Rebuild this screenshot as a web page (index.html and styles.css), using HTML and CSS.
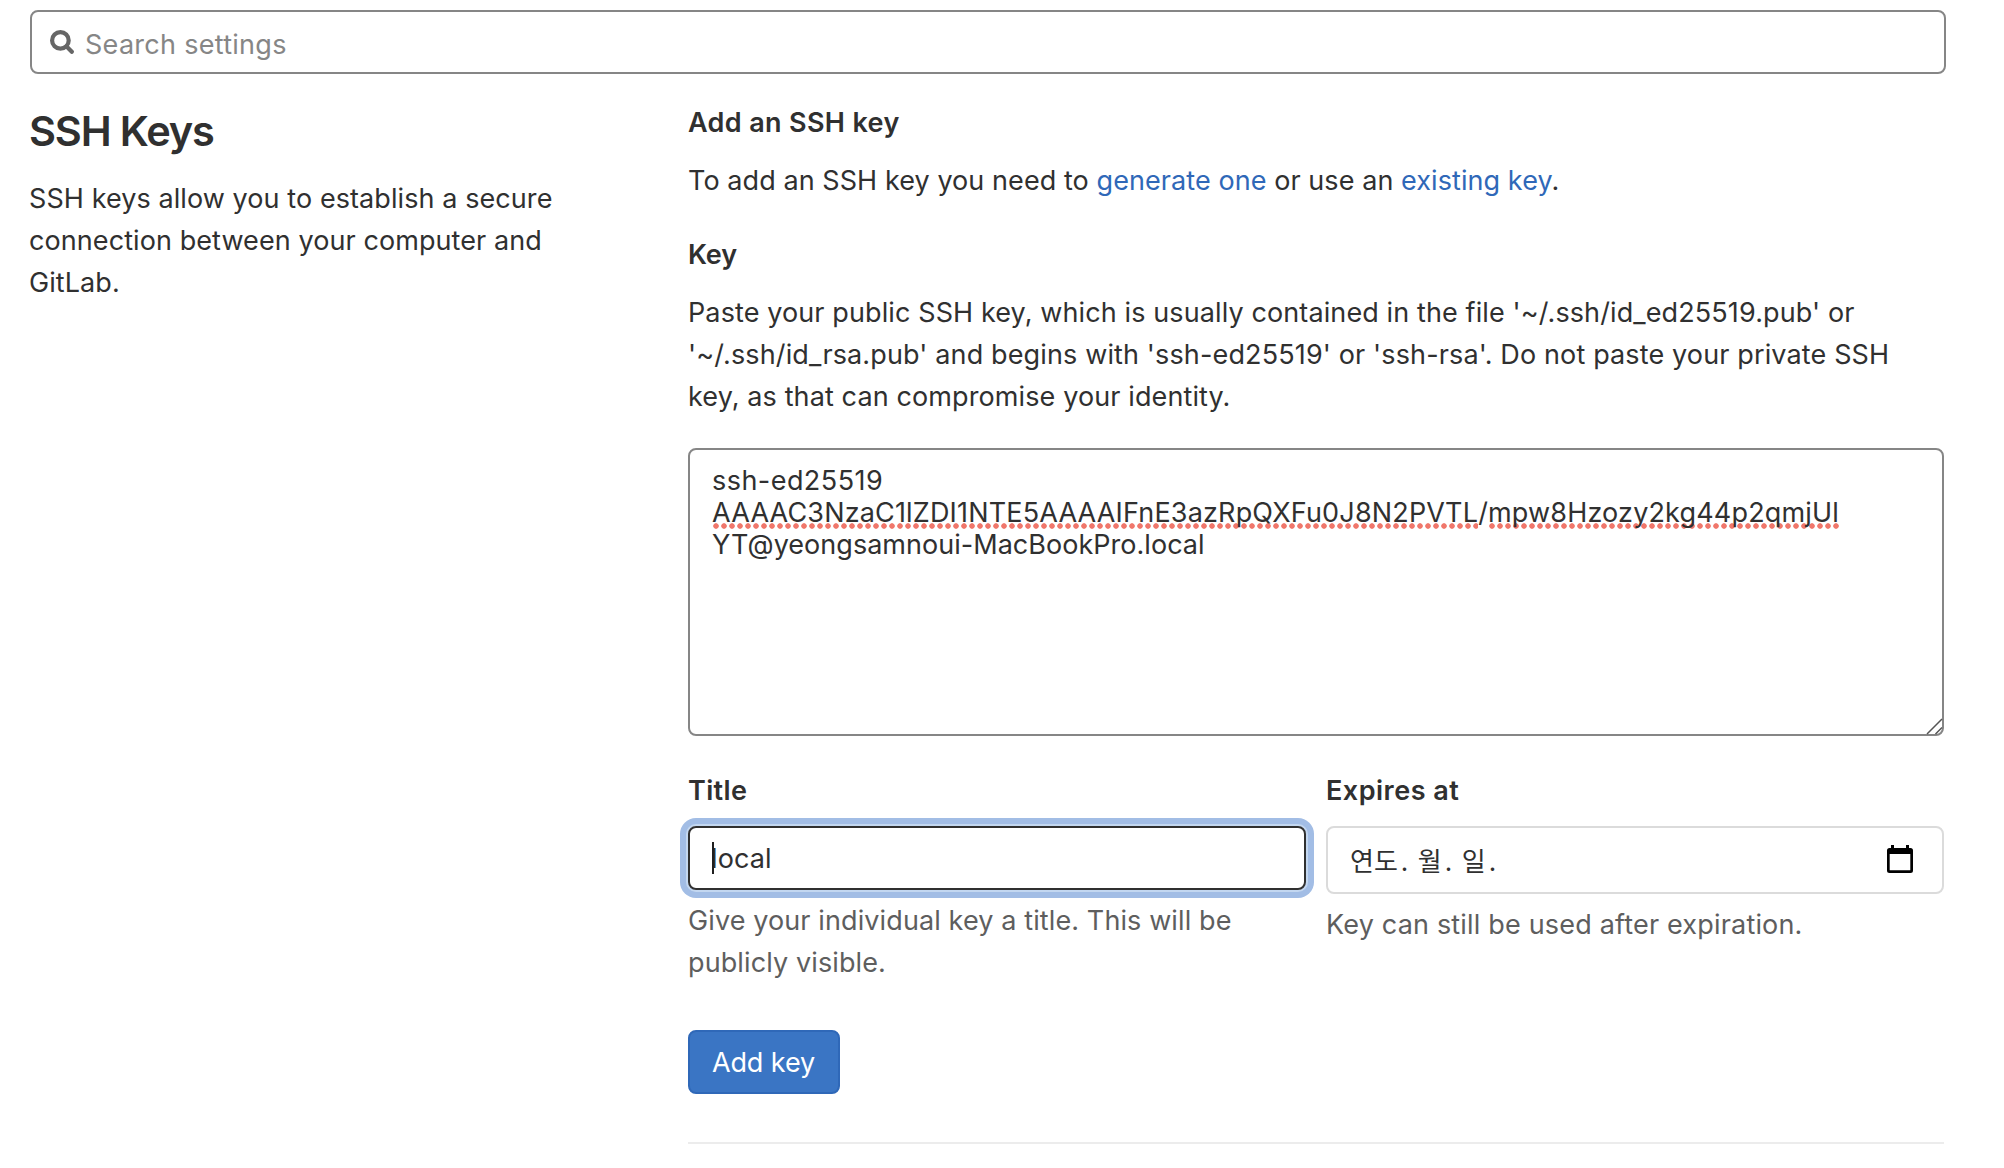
FILE: index.html
```html
<!DOCTYPE html>
<html lang="en">
<head>
<meta charset="utf-8">
<title>SSH Keys</title>
<link rel="stylesheet" href="styles.css">
</head>
<body>
<div class="search">
  <svg class="search-icon" width="24" height="24" viewBox="0 0 24 24" fill="none" stroke="#666" stroke-width="4.2" stroke-linecap="round"><circle cx="10.4" cy="10.4" r="8.3"/><path d="M16.6 16.6 21.8 21.8"/></svg>
  <span class="search-text">Search settings</span>
</div>
<main class="layout">
  <section class="intro">
    <h1>SSH Keys</h1>
    <p><span class="line intro-line">SSH keys allow you to establish a secure</span><span class="line intro-line">connection between your computer and</span><span class="line intro-line">GitLab.</span></p>
  </section>
  <section class="form">
    <h2>Add an SSH key</h2>
    <p class="hint">To add an SSH key you need to <a>generate one</a> or use an <a>existing key</a>.</p>
    <label class="key-label">Key</label>
    <p><span class="line">Paste your public SSH key, which is usually contained in the file '~/.ssh/id_ed25519.pub' or</span><span class="line wide-line">'~/.ssh/id_rsa.pub' and begins with 'ssh-ed25519' or 'ssh-rsa'. Do not paste your private SSH</span><span class="line">key, as that can compromise your identity.</span></p>
    <div class="textarea">
      <span class="line key-type">ssh-ed25519</span>
      <span class="line key-body"><span class="misspelled">AAAAC3NzaC1lZDI1NTE5AAAAIFnE3azRpQXFu0J8N2PVTL</span>/<span class="misspelled">mpw8Hzozy2kg44p2qmjUl</span></span>
      <span class="line key-host">YT@yeongsamnoui-MacBookPro.local</span>
      <svg class="grip" width="18" height="18" viewBox="0 0 18 18" fill="none" stroke="#555" stroke-width="1.5"><path d="M1 16 16 1M9.5 16 16 9.5"/></svg>
    </div>
    <div class="fields">
      <div class="field">
        <label>Title</label>
        <div class="input focused"><span class="caret"></span>local</div>
        <p class="help"><span class="line">Give your individual key a title. This will be</span><span class="line">publicly visible.</span></p>
      </div>
      <div class="field">
        <label class="expires-label">Expires at</label>
        <div class="input date" lang="ko">
          <span class="date-text">연도<span class="sep">.</span>월<span class="sep">.</span>일<span class="sep">.</span></span>
          <svg class="calendar" width="26" height="28" viewBox="0 0 26 28"><path fill="#000" fill-rule="evenodd" d="M4 0h3v3h12V0h3v3h1.500a2.500 2.500 0 0 1 2.500 2.500v20a2.500 2.500 0 0 1-2.500 2.500h-21A2.500 2.500 0 0 1 0 25.500v-20A2.500 2.500 0 0 1 2.500 3H4zM2.700 9v16.300h20.600V9z"/></svg>
        </div>
        <p class="help expires-help">Key can still be used after expiration.</p>
      </div>
    </div>
    <div class="actions"><button class="btn">Add key</button></div>
  </section>
</main>
</body>
</html>
```

FILE: styles.css
```css
* { box-sizing: border-box; }

body {
  margin: 0;
  padding: 10px 58px 0 30px;
  background: #fff;
  color: #303030;
  font: 400 27px/42px Inter, "Noto Sans CJK KR", sans-serif;
  letter-spacing: 0.11px;
}

h1, h2, p { margin: 0; }
label, .line { display: block; }
.line { white-space: nowrap; }

.search {
  display: flex;
  align-items: center;
  height: 64px;
  border: 2px solid #868686;
  border-radius: 8px;
  padding-left: 18px;
  color: #868686;
}
.search-icon { margin-bottom: 1px; }
.search-text { margin: 5px 0 0 11px; letter-spacing: 0.28px; }

.layout {
  display: grid;
  grid-template-columns: 658px 1256px;
}

.intro { padding-top: 33px; margin-left: -1px; }
h1 {
  font-size: 41.5px;
  font-weight: 600;
  line-height: 48px;
  letter-spacing: -1.15px;
  margin-bottom: 23px;
}
.intro-line { letter-spacing: 0.08px; }

.form { padding-top: 28px; }
h2, label {
  font-size: 27px;
  font-weight: 600;
  line-height: 42px;
  letter-spacing: 0.35px;
}
h2 { margin-bottom: 16px; }
.hint { letter-spacing: 0.07px; margin-bottom: 32px; }
a { color: #2f68b8; }
.key-label { letter-spacing: -0.1px; margin-bottom: 16px; }
.wide-line { letter-spacing: 0.135px; }

.textarea {
  position: relative;
  height: 288px;
  margin: 30px 0 34px;
  padding: 15px 22px;
  border: 2px solid #868686;
  border-radius: 8px;
  line-height: 32px;
}
.key-type { letter-spacing: 0.45px; }
.key-body { letter-spacing: 0.165px; }
.key-host { letter-spacing: 0.03px; }
.misspelled {
  background: radial-gradient(circle at 50% 50%, #f0776b 2.4px, transparent 3.1px) left bottom / 8px 6px repeat-x;
  padding-bottom: 0;
}
.grip { position: absolute; right: -2px; bottom: -2px; }

.fields {
  display: grid;
  grid-template-columns: 618px 618px;
  gap: 20px;
}
.expires-label { letter-spacing: 0.5px; }
.input {
  display: flex;
  align-items: center;
  position: relative;
  height: 64px;
  margin-top: 14px;
  padding: 2px 0 0 21px;
  border: 2px solid #dbdbdb;
  border-radius: 8px;
}
.focused {
  border-color: #303030;
  box-shadow: 0 0 0 2px #c3d7f0, 0 0 0 8px #a2bde5;
}
.caret {
  position: absolute;
  left: 22px;
  top: 14px;
  width: 2px;
  height: 32px;
  background: #1f1f1f;
}
.date {
  height: 68px;
  justify-content: space-between;
  padding: 0 29px 0 22px;
}
.date-text { margin-top: 4px; font-size: 26px; letter-spacing: 0; }
.calendar { margin-bottom: 2px; }
.sep {
  display: inline-block;
  width: 20px;
  padding-left: 3px;
}
.help { margin-top: 10px; color: #5e5e5e; }
.expires-help { letter-spacing: 0.18px; }

.actions {
  margin-top: 46px;
  padding-bottom: 48px;
  border-bottom: 2px solid #ececec;
  line-height: 0;
}
.btn {
  width: 152px;
  height: 64px;
  padding: 2px 1px 0 0;
  border: 2px solid #2f68b8;
  border-radius: 8px;
  background: #3a75c4;
  color: #fff;
  font: 400 27px/42px Inter, sans-serif;
  letter-spacing: -0.1px;
}
```
